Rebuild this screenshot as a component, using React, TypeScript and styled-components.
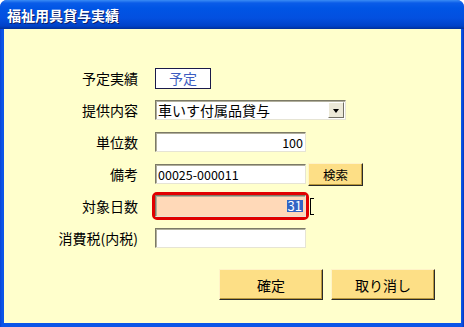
import styled, { createGlobalStyle } from "styled-components";

const GlobalStyle = createGlobalStyle`
  html, body {
    margin: 0;
    padding: 0;
    background: #ffffff;
  }
  body {
    font-family: "Noto Sans CJK JP", "Noto Sans", sans-serif;
    font-size: 12px;
  }
`;

const Window = styled.div`
  width: 464px;
  height: 327px;
  display: flex;
  flex-direction: column;
  box-sizing: border-box;
  background: #0a3fd8;
  border-radius: 7px 7px 0 0;
  overflow: hidden;
`;

const TitleBar = styled.div`
  height: 29px;
  flex: none;
  display: flex;
  align-items: center;
  padding-left: 7px;
  background: linear-gradient(
    to bottom,
    #3a8cf5 0px,
    #0a5ce8 3px,
    #0055e5 8px,
    #0350e0 18px,
    #0042c8 26px,
    #00309a 29px
  );
  color: #ffffff;
  font-weight: bold;
  font-size: 14px;
  text-shadow: 1px 1px 0 #0a1f6a;
`;

const Frame = styled.div`
  flex: 1;
  display: flex;
  padding: 0 3px 4px 4px;
  background: linear-gradient(to right, #0843d4, #0a55e8 2px, #0a55e8 calc(100% - 2px), #0632b8);
`;

const Body = styled.div`
  flex: 1;
  background: #ffffcc;
  padding-top: 33px;
  display: flex;
  flex-direction: column;
`;

const Form = styled.div`
  display: grid;
  grid-template-columns: 134px 1fr;
  grid-auto-rows: 32px;
  column-gap: 17px;
  align-items: center;
`;

const Label = styled.div`
  text-align: right;
  font-size: 14px;
  color: #000000;
  white-space: nowrap;
`;

const Field = styled.div<{ $shift?: number }>`
  display: flex;
  align-items: center;
  gap: 2px;
  margin-left: ${({ $shift }) => $shift ?? 0}px;
`;

const StatusBox = styled.div`
  width: 56px;
  height: 21px;
  box-sizing: border-box;
  border: 1px solid #1a1a4a;
  background: #ffffff;
  color: #3c5cc0;
  font-size: 14px;
  display: flex;
  align-items: center;
  justify-content: center;
`;

const Input = styled.div<{ $align?: "left" | "right"; $bg?: string; $h?: number }>`
  width: 151px;
  height: ${({ $h }) => $h ?? 20}px;
  box-sizing: border-box;
  border: 1px solid;
  border-color: #7c7a66 #e6e4d4 #e6e4d4 #7c7a66;
  box-shadow: inset 1px 1px 0 #b0ae9c;
  background: ${({ $bg }) => $bg ?? "#ffffff"};
  display: flex;
  align-items: center;
  justify-content: ${({ $align }) => ($align === "right" ? "flex-end" : "flex-start")};
  padding: 0 2px;
  font-size: 12.5px;
  color: #000000;
`;

const Select = styled.div`
  width: 191px;
  height: 20px;
  box-sizing: border-box;
  border: 1px solid;
  border-color: #7c7a66 #e6e4d4 #e6e4d4 #7c7a66;
  box-shadow: inset 1px 1px 0 #b0ae9c;
  background: #ffffff;
  display: flex;
  align-items: center;
  padding-left: 2px;
  font-size: 14px;
`;

const SelectText = styled.span`
  flex: 1;
`;

const DropButton = styled.div`
  width: 16px;
  height: 16px;
  margin-right: 1px;
  box-sizing: border-box;
  background: #ece9d8;
  border: 1px solid;
  border-color: #ffffff #716f64 #716f64 #ffffff;
  display: flex;
  align-items: center;
  justify-content: center;
`;

const Arrow = styled.div`
  width: 0;
  height: 0;
  border-left: 3.5px solid transparent;
  border-right: 3.5px solid transparent;
  border-top: 4px solid #000000;
  margin-top: 1px;
`;

const FocusRing = styled.div`
  border: 3px solid #e00000;
  border-radius: 5px;
  display: flex;
`;

const Selected = styled.span`
  background: #3165c4;
  color: #ffffff;
  padding: 0 1px;
  font-size: 13px;
  line-height: 12px;
`;

const Caret = styled.span`
  width: 3px;
  height: 15px;
  margin-left: -1px;
  border: 1px solid #000000;
  border-right: none;
`;

const ActionButton = styled.button<{ $w: number; $h: number; $size?: number }>`
  width: ${({ $w }) => $w}px;
  height: ${({ $h }) => $h}px;
  box-sizing: border-box;
  background: #fddf86;
  border: 1px solid;
  border-color: #fff3c8 #2a2a2a #2a2a2a #fff3c8;
  box-shadow: inset -1px -1px 0 #b8983c;
  font-family: "Noto Sans CJK JP", sans-serif;
  font-size: ${({ $size }) => $size ?? 14}px;
  color: #000000;
  padding: 0;
  display: flex;
  align-items: center;
  justify-content: center;
`;

const Buttons = styled.div`
  display: flex;
  gap: 8px;
  margin-top: 15px;
  padding-left: 215px;
`;

export default function App() {
  return (
    <>
      <GlobalStyle />
      <Window>
        <TitleBar>福祉用具貸与実績</TitleBar>
        <Frame>
          <Body>
            <Form>
              <Label>予定実績</Label>
              <Field>
                <StatusBox>予定</StatusBox>
              </Field>

              <Label>提供内容</Label>
              <Field>
                <Select>
                  <SelectText>車いす付属品貸与</SelectText>
                  <DropButton>
                    <Arrow />
                  </DropButton>
                </Select>
              </Field>

              <Label>単位数</Label>
              <Field>
                <Input $align="right">100</Input>
              </Field>

              <Label>備考</Label>
              <Field>
                <Input>00025-000011</Input>
                <ActionButton $w={55} $h={23} $size={12.5}>
                  検索
                </ActionButton>
              </Field>

              <Label>対象日数</Label>
              <Field $shift={-3}>
                <FocusRing>
                  <Input $align="right" $bg="#ffd9b8" $h={22}>
                    <Selected>31</Selected>
                  </Input>
                </FocusRing>
                <Caret />
              </Field>

              <Label>消費税(内税)</Label>
              <Field>
                <Input />
              </Field>
            </Form>
            <Buttons>
              <ActionButton $w={104} $h={31}>確定</ActionButton>
              <ActionButton $w={104} $h={31}>取り消し</ActionButton>
            </Buttons>
          </Body>
        </Frame>
      </Window>
    </>
  );
}
